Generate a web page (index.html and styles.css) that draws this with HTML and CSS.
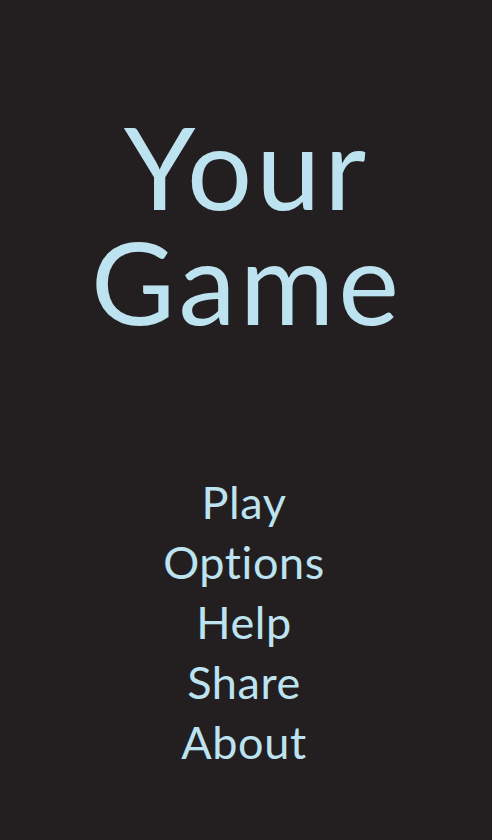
FILE: index.html
```html
<!DOCTYPE html>
<html>
<head>
<meta charset="utf-8">
<link rel="stylesheet" href="styles.css">
</head>
<body>
<main class="screen">
  <h1 class="title">Your<br>Game</h1>
  <nav class="menu">
    <a class="menu-item">Play</a>
    <a class="menu-item">Options</a>
    <a class="menu-item">Help</a>
    <a class="menu-item">Share</a>
    <a class="menu-item">About</a>
  </nav>
</main>
</body>
</html>
```

FILE: styles.css
```css
html, body {
  margin: 0;
  padding: 0;
  background: #231f20;
}
.screen {
  width: 492px;
  height: 840px;
  display: flex;
  flex-direction: column;
  align-items: center;
  font-family: Lato, "Noto Sans", sans-serif;
  color: #bde3f0;
}
.title {
  margin: 108px 0 0 0;
  padding-left: 2px;
  font-size: 115px;
  line-height: 115px;
  font-weight: 400;
  letter-spacing: 4px;
  text-align: center;
}
.menu {
  margin-top: 134px;
  display: flex;
  flex-direction: column;
  align-items: center;
}
.menu-item {
  font-size: 45px;
  line-height: 60px;
  letter-spacing: 0.6px;
  margin-right: 4px;
}
```
